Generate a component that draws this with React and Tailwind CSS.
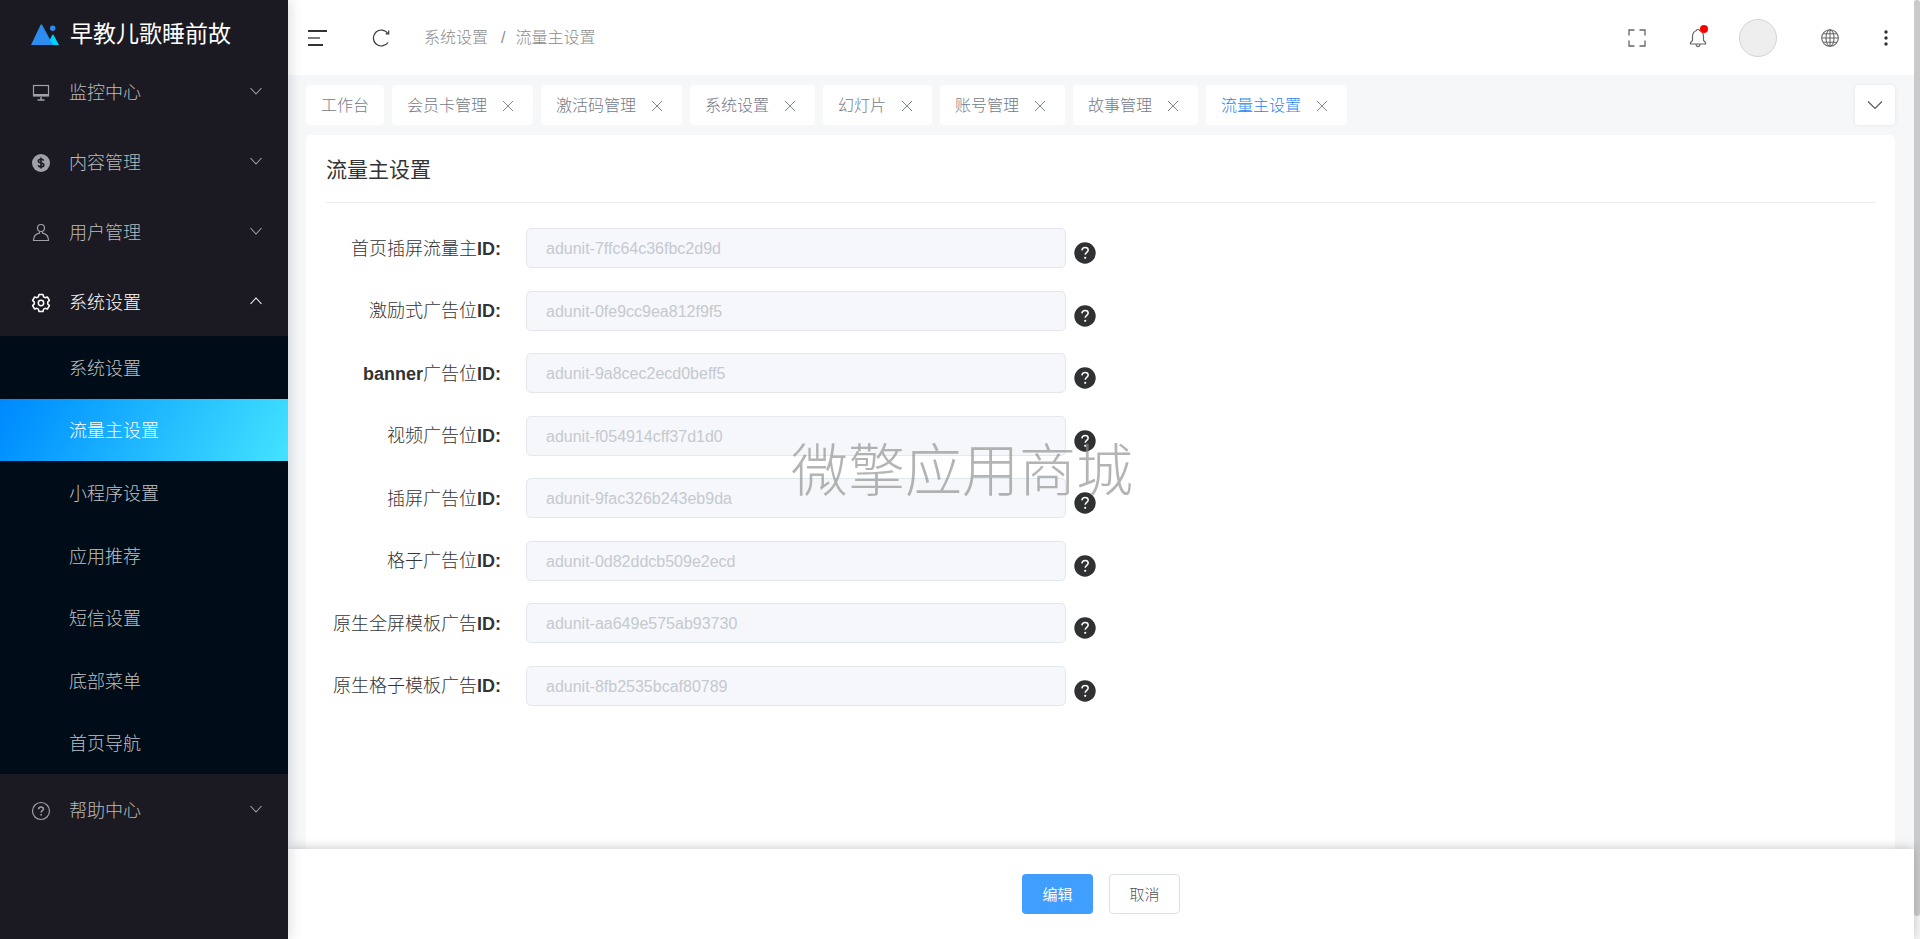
import React from "react";

const MENU_TOP = [
  { label: "监控中心", icon: "monitor" },
  { label: "内容管理", icon: "dollar" },
  { label: "用户管理", icon: "user" },
];

const SUBMENU = ["系统设置", "流量主设置", "小程序设置", "应用推荐", "短信设置", "底部菜单", "首页导航"];

const TABS = ["工作台", "会员卡管理", "激活码管理", "系统设置", "幻灯片", "账号管理", "故事管理", "流量主设置"];

const FIELDS = [
  { id: "home", pre: "", label: "首页插屏流量主", value: "adunit-7ffc64c36fbc2d9d" },
  { id: "reward", pre: "", label: "激励式广告位", value: "adunit-0fe9cc9ea812f9f5" },
  { id: "banner", pre: "banner", label: "广告位", value: "adunit-9a8cec2ecd0beff5" },
  { id: "video", pre: "", label: "视频广告位", value: "adunit-f054914cff37d1d0" },
  { id: "insert", pre: "", label: "插屏广告位", value: "adunit-9fac326b243eb9da" },
  { id: "grid", pre: "", label: "格子广告位", value: "adunit-0d82ddcb509e2ecd" },
  { id: "native-full", pre: "", label: "原生全屏模板广告", value: "adunit-aa649e575ab93730" },
  { id: "native-grid", pre: "", label: "原生格子模板广告", value: "adunit-8fb2535bcaf80789" },
];

function MenuIcon({ name }) {
  const common = {
    width: 20,
    height: 20,
    viewBox: "0 0 20 20",
    fill: "none",
    stroke: "currentColor",
    strokeWidth: 1.2,
    className: "mt-1",
  };
  if (name === "monitor")
    return (
      <svg {...common}>
        <rect x="2.5" y="2.5" width="15" height="10.500" />
        <path d="M2.500 12h15" strokeWidth="2" />
        <path d="M10 14v3M6.500 17h7" strokeWidth="1.500" />
      </svg>
    );
  if (name === "dollar")
    return (
      <svg {...common}>
        <circle cx="10" cy="10" r="9" fill="currentColor" stroke="none" />
        <path
          d="M12.700 7.600c-.4-1-1.500-1.400-2.700-1.400-1.500 0-2.700.7-2.700 1.900 0 2.700 5.500 1.200 5.500 3.900 0 1.200-1.300 1.900-2.800 1.900-1.300 0-2.500-.5-2.800-1.600M10 4.600v10.800"
          stroke="#1b1a23"
          strokeWidth="1.600"
        />
      </svg>
    );
  if (name === "user")
    return (
      <svg {...common}>
        <circle cx="10" cy="5" r="3.500" />
        <path d="M8.500 8.400v1.800C5 10.800 2.500 13 2.500 17.500h15c0-4.500-2.500-6.700-6-7.300V8.400" />
      </svg>
    );
  if (name === "gear")
    return (
      <svg {...common} strokeWidth="1.500">
        <path
          strokeLinejoin="round"
          d="M8 1.500h4l.6 2.300 1.500.9 2.300-.7 2 3.400-1.700 1.700v1.800l1.700 1.700-2 3.400-2.300-.7-1.500.9-.6 2.300H8l-.6-2.300-1.500-.9-2.300.7-2-3.400 1.700-1.700V9.100L1.600 7.400l2-3.400 2.300.7 1.500-.9z"
        />
        <circle cx="10" cy="10" r="2.700" />
      </svg>
    );
  return (
    <svg {...common}>
      <circle cx="10" cy="10" r="8.500" />
      <path d="M7.600 8.200c0-1.500 1-2.300 2.400-2.300s2.400.9 2.400 2.100c0 1.600-2.300 1.700-2.300 3.600M10.100 13v1.500" strokeWidth="1.500" />
    </svg>
  );
}

function Chevron({ up = false }) {
  return (
    <svg width="14" height="14" viewBox="0 0 14 14" fill="none" stroke="currentColor" strokeWidth="1.100">
      <path d={up ? "M1.500 10 7 4l5.500 6" : "M1.500 4 7 10l5.500-6"} />
    </svg>
  );
}

function MenuItem({ label, icon, open = false }) {
  return (
    <button
      type="button"
      aria-expanded={open}
      className={`flex h-[70px] w-full items-center pr-[25px] pl-[31px] text-[18px] ${open ? "text-white" : "text-[#a0a0a8]"}`}
    >
      <MenuIcon name={icon} />
      <span className={`ml-[18px] flex-1 pt-1 text-left ${open ? "text-white" : "text-[#bababd]"}`}>{label}</span>
      <Chevron up={open} />
    </button>
  );
}

function Sidebar() {
  return (
    <aside className="z-20 flex w-72 shrink-0 flex-col bg-[#1b1a23] shadow-[2px_0_12px_rgba(0,21,41,0.15)]">
      <div className="flex h-14 items-center pt-3 pl-[31px]">
        <svg width="28" height="21" viewBox="0 0 28 21">
          <path d="M0 21 9.500 1c.5-.9 1.200-.9 1.700 0L22 21z" fill="#2d8cf0" />
          <path d="M16.500 21 21.200 11c.4-.7 1-.7 1.400 0L28 21z" fill="#00d2ff" />
          <path d="M18.700 15.500 22 21h-5.500z" fill="#2d8cf0" />
          <circle cx="21.700" cy="4.300" r="2.700" fill="#2d8cf0" />
        </svg>
        <span className="ml-[11px] text-[23px] leading-none font-normal text-white">早教儿歌睡前故</span>
      </div>
      <nav>
        {MENU_TOP.map((m) => (
          <MenuItem key={m.label} {...m} />
        ))}
        <MenuItem label="系统设置" icon="gear" open />
        <ul className="flex h-[438px] flex-col bg-[#000c17]">
          {SUBMENU.map((s, i) => (
            <li key={s} className="flex-1">
              <a
                href="#"
                className={`flex h-full items-center pt-1 pl-[69px] text-[18px] ${
                  i === 1 ? "bg-linear-118 from-[#0088ff] to-[#43e3ff] text-white" : "text-[#bfc2c5]"
                }`}
              >
                {s}
              </a>
            </li>
          ))}
        </ul>
        <MenuItem label="帮助中心" icon="help" />
      </nav>
    </aside>
  );
}

function Header() {
  return (
    <header className="flex h-[75px] items-center bg-white pr-[18px] pl-5 text-[#333]">
      <button type="button" aria-label="折叠菜单">
        <svg width="20" height="20" viewBox="0 0 20 20" stroke="currentColor">
          <path d="M0 3h19M0 17h15" strokeWidth="2" />
          <path d="M0 10h12" strokeWidth="1.300" />
        </svg>
      </button>
      <button type="button" aria-label="刷新" className="ml-[43px]">
        <svg width="20" height="20" viewBox="0 0 20 20" fill="none" stroke="currentColor" strokeWidth="1.200">
          <path d="M17 5.500A8 8 0 1 0 17 14.500" />
          <path d="M17.700 2.500v3.300h-3" />
        </svg>
      </button>
      <nav className="ml-[33px] flex items-center pt-px text-base text-[#8c8c8c]">
        <a href="#">系统设置</a>
        <span className="mr-[10px] ml-[13px]">/</span>
        <span>流量主设置</span>
      </nav>
      <div className="ml-auto flex items-center text-[#666]">
        <button type="button" aria-label="全屏">
          <svg width="20" height="20" viewBox="0 0 20 20" fill="none" stroke="currentColor" strokeWidth="1.300">
            <path d="M2 7.500V2h5.500M12.500 2H18v5.500M18 12.500V18h-5.500M7.500 18H2v-5.500" />
          </svg>
        </button>
        <button type="button" aria-label="通知" className="relative ml-[41px]">
          <svg width="20" height="22" viewBox="0 0 20 22" fill="none" stroke="currentColor" strokeWidth="1.200">
            <path d="M2.500 17h15v-1.500l-2-2V9.500c0-3-1.700-5.200-4-6-.2-1.700-2.800-1.700-3 0-2.300.8-4 3-4 6v4l-2 2zM8 17.500c.3 2.700 3.700 2.700 4 0" />
          </svg>
          <span className="absolute -top-0.5 right-0 size-2 rounded-full bg-[#ff0000]" />
        </button>
        <button type="button" aria-label="用户" className="ml-[31px] size-[38px] rounded-full border border-[#d4d4d4] bg-[#eee]" />
        <button type="button" aria-label="语言" className="ml-[43px]">
          <svg width="20" height="20" viewBox="0 0 20 20" fill="none" stroke="currentColor" strokeWidth="1.100">
            <circle cx="10" cy="10" r="8.300" />
            <ellipse cx="10" cy="10" rx="4" ry="8.300" />
            <path d="M10 1.700v16.600M1.700 10h16.600M3 5.800h14M3 14.200h14" />
          </svg>
        </button>
        <button type="button" aria-label="更多" className="ml-9 text-[#333]">
          <svg width="20" height="20" viewBox="0 0 20 20" fill="currentColor">
            <circle cx="10" cy="4" r="1.700" />
            <circle cx="10" cy="10" r="1.700" />
            <circle cx="10" cy="16" r="1.700" />
          </svg>
        </button>
      </div>
    </header>
  );
}

function TabBar() {
  return (
    <div className="flex h-[60px] items-center gap-2 pr-[19px] pl-[18px] text-base text-[#747a89]">
      {TABS.map((t, i) => (
        <div key={t} className="flex h-10 items-center rounded-[4px] bg-white px-[15px]">
          <a href="#" className={`pt-0.5 ${i === TABS.length - 1 ? "text-[#1f85f0]" : ""}`}>
            {t}
          </a>
          {i > 0 && (
            <button type="button" aria-label={`关闭${t}`} className="mr-1 ml-[15px] pt-px">
              <svg width="12" height="12" viewBox="0 0 12 12" stroke="currentColor" strokeWidth="0.900">
                <path d="M1 1l10 10M11 1 1 11" />
              </svg>
            </button>
          )}
        </div>
      ))}
      <button
        type="button"
        aria-label="更多标签"
        className="ml-auto flex size-10 items-center justify-center rounded-[4px] bg-white text-[#555] shadow-[0_0_4px_rgba(0,0,0,0.08)]"
      >
        <svg width="16" height="10" viewBox="0 0 16 10" fill="none" stroke="currentColor" strokeWidth="1.100">
          <path d="M1 1.500l7 7 7-7" />
        </svg>
      </button>
    </div>
  );
}

function HelpDot() {
  return (
    <svg width="22" height="22" viewBox="0 0 22 22">
      <circle cx="11" cy="11" r="10.700" fill="#303133" />
      <path d="M7.900 8.300c.2-1.900 1.400-2.900 3.200-2.900 1.900 0 3.100 1 3.100 2.600 0 2.400-3 2.200-3 4.700" fill="none" stroke="#fff" strokeWidth="1.500" />
      <circle cx="11.200" cy="15.800" r="1.100" fill="#fff" />
    </svg>
  );
}

function Field({ id, pre, label, value }) {
  return (
    <div className="flex flex-1 items-start">
      <label
        htmlFor={id}
        className="flex h-10 w-[200px] items-center justify-end pt-0.5 pr-[25px] text-[18px] whitespace-nowrap text-[#333]"
      >
        <span>
          <span className="font-bold">{pre}</span>
          {label}
          <span className="font-bold">ID:</span>
        </span>
      </label>
      <input
        id={id}
        type="text"
        disabled
        defaultValue={value}
        className="h-10 w-[540px] rounded-[5px] border border-[#e4e7ed] bg-[#f5f7fa] px-[19px] pt-0.5 text-base text-[#c5c9d0]"
      />
      <button type="button" aria-label={`${pre}${label}ID 说明`} className="mt-[14px] ml-2">
        <HelpDot />
      </button>
    </div>
  );
}

export default function App() {
  return (
    <div className="flex min-h-screen bg-[#f5f7f9] font-['Liberation_Sans','Noto_Sans_CJK_SC',sans-serif] font-light">
      <Sidebar />
      <div className="flex min-w-0 flex-1 flex-col">
        <Header />
        <TabBar />
        <main className="mr-[19px] ml-[18px] flex-1 rounded-t-[5px] bg-white px-5">
          <h1 className="flex h-[68px] items-center border-b border-[#ebedef] pt-0.5 text-[21px] font-normal text-[#333]">
            流量主设置
          </h1>
          <form id="ad-form" className="mt-[25px] flex h-[500px] flex-col">
            {FIELDS.map((f) => (
              <Field key={f.id} {...f} />
            ))}
          </form>
        </main>
        <footer className="z-10 flex h-[90px] items-center justify-center gap-4 bg-white shadow-[0_-1px_10px_rgba(0,0,0,0.2)]">
          <button
            type="submit"
            form="ad-form"
            className="h-10 w-[71px] rounded-[4px] bg-[#409eff] pt-0.5 text-[15px] font-normal text-white"
          >
            编辑
          </button>
          <button
            type="button"
            className="h-10 w-[71px] rounded-[4px] border border-[#dcdfe6] bg-white pt-0.5 text-[15px] text-[#505256]"
          >
            取消
          </button>
        </footer>
      </div>
      <div className="w-[6px] shrink-0 bg-[#f5f5f5]">
        <div className="h-[916px] rounded-[3px] bg-[#cacaca]" />
      </div>
      <div className="pointer-events-none fixed inset-0 z-30 flex items-center justify-center pt-1 pl-1 text-[57px] text-[#8c8c8c]/65">
        微擎应用商城
      </div>
    </div>
  );
}
